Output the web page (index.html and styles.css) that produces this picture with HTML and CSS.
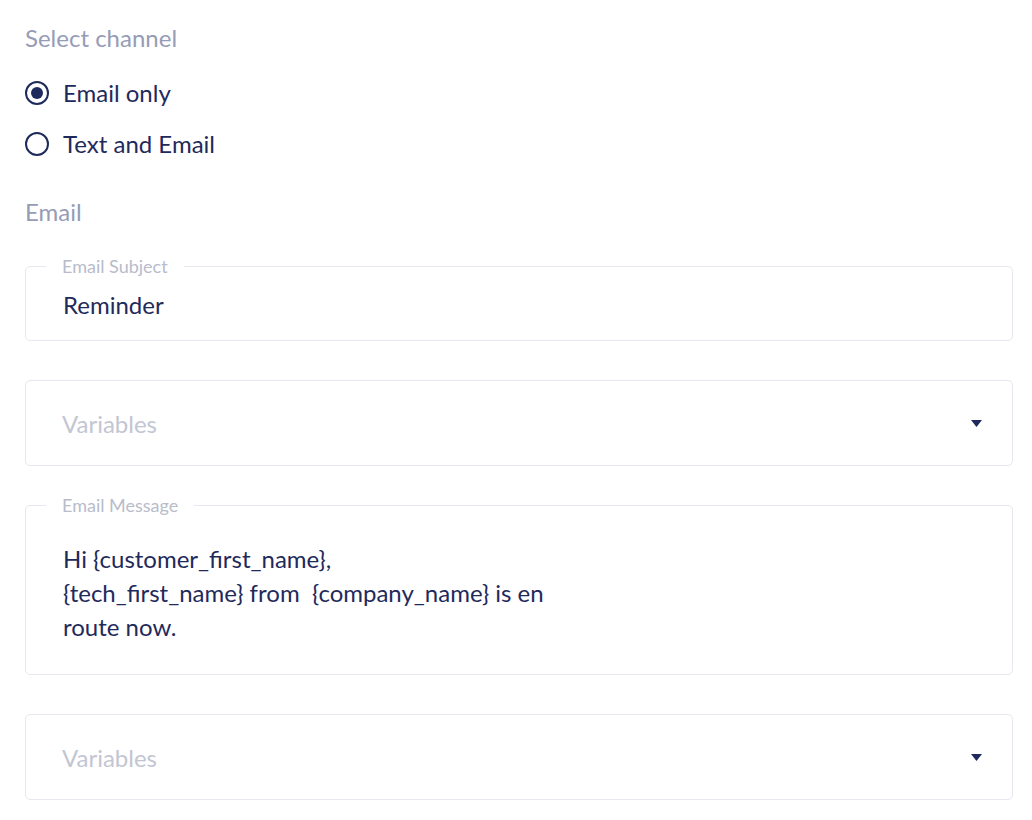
FILE: index.html
```html
<!DOCTYPE html>
<html>
<head>
<meta charset="utf-8">
<link rel="stylesheet" href="styles.css">
</head>
<body>
<div class="card">
  <div class="section-label">Select channel</div>
  <div class="radio-group">
    <label class="radio-row"><span class="radio checked"></span><span>Email only</span></label>
    <label class="radio-row"><span class="radio"></span><span>Text and Email</span></label>
  </div>
  <div class="section-label email-label">Email</div>
  <fieldset class="field subject">
    <legend>Email Subject</legend>
    <div class="value">Reminder</div>
  </fieldset>
  <div class="select">
    <span class="placeholder">Variables</span>
    <svg class="arrow" width="11" height="7" viewBox="0 0 11 7"><path d="M0 0H11L5.5 7Z" fill="#1f2a5c"/></svg>
  </div>
  <fieldset class="field message">
    <legend>Email Message</legend>
    <div class="value">Hi {customer_first_name},<br>{tech_first_name} from &nbsp;{company_name} is en<br>route now.</div>
  </fieldset>
  <div class="select">
    <span class="placeholder">Variables</span>
    <svg class="arrow" width="11" height="7" viewBox="0 0 11 7"><path d="M0 0H11L5.5 7Z" fill="#1f2a5c"/></svg>
  </div>
</div>
</body>
</html>
```
FILE: styles.css
```css
html, body {
  margin: 0;
  padding: 0;
  background: #ffffff;
}
body {
  font-family: Lato, "Open Sans", sans-serif;
  color: #1f2a5c;
  width: 1032px;
  height: 820px;
  overflow: hidden;
}
.card {
  display: flex;
  flex-direction: column;
  padding: 24px 19px 0 25px;
}
.section-label {
  font-size: 24px;
  line-height: 28px;
  color: #969cb6;
}
.radio-group {
  display: flex;
  flex-direction: column;
  gap: 23px;
  margin-top: 27px;
}
.radio-row {
  display: flex;
  align-items: center;
  gap: 14px;
  font-size: 24px;
  line-height: 28px;
}
.radio {
  width: 24px;
  height: 24px;
  box-sizing: border-box;
  border: 2px solid #1f2a5c;
  border-radius: 50%;
  display: flex;
  align-items: center;
  justify-content: center;
}
.radio.checked::after {
  content: "";
  width: 12px;
  height: 12px;
  border-radius: 50%;
  background: #1f2a5c;
}
.email-label {
  margin-top: 40px;
}
.field {
  margin: 0;
  border: 1.5px solid #e6e7ef;
  border-radius: 5px;
  padding: 0 37px;
  min-width: 0;
}
.field legend {
  font-size: 18px;
  line-height: 22px;
  color: #b8bccb;
  padding: 0 16px;
  margin-left: -17px;
}
.value {
  font-size: 24px;
}
.subject {
  margin-top: 29px;
}
.subject .value {
  line-height: 28px;
  padding: 14px 0 21px;
}
.select {
  display: flex;
  align-items: center;
  justify-content: space-between;
  border: 1.5px solid #e6e7ef;
  border-radius: 5px;
  height: 86px;
  box-sizing: border-box;
  padding: 0 30px 0 36px;
  margin-top: 39px;
}
.placeholder {
  font-size: 24px;
  color: #c2c6d3;
}
.message {
  margin-top: 28px;
}
.message .value {
  line-height: 34px;
  padding: 26px 0 30px;
}
```
